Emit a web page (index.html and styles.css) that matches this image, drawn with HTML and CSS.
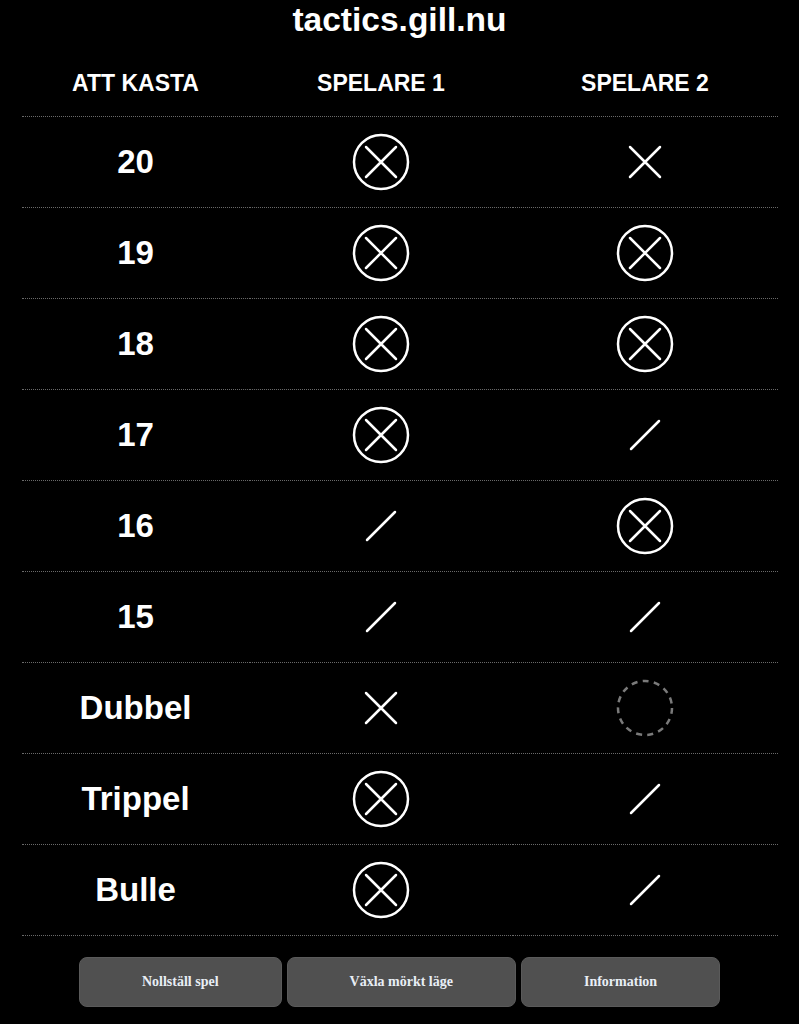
FILE: index.html
```html
<!DOCTYPE html>
<html lang="sv">
<head>
<meta charset="utf-8">
<title>tactics.gill.nu</title>
<link rel="stylesheet" href="styles.css">
</head>
<body>
<h1 class="title">tactics.gill.nu</h1>
<table class="board">
  <colgroup><col class="c1"><col class="c2"><col class="c3"></colgroup>
  <thead>
    <tr><th>ATT KASTA</th><th>SPELARE 1</th><th>SPELARE 2</th></tr>
  </thead>
  <tbody>
    <tr><td class="label">20</td>
      <td><svg class="mark" viewBox="0 0 60 60"><circle cx="30" cy="30" r="27"/><path d="M15 15L45 45M45 15L15 45"/></svg></td>
      <td><svg class="mark" viewBox="0 0 60 60"><path d="M15 15L45 45M45 15L15 45"/></svg></td></tr>
    <tr><td class="label">19</td>
      <td><svg class="mark" viewBox="0 0 60 60"><circle cx="30" cy="30" r="27"/><path d="M15 15L45 45M45 15L15 45"/></svg></td>
      <td><svg class="mark" viewBox="0 0 60 60"><circle cx="30" cy="30" r="27"/><path d="M15 15L45 45M45 15L15 45"/></svg></td></tr>
    <tr><td class="label">18</td>
      <td><svg class="mark" viewBox="0 0 60 60"><circle cx="30" cy="30" r="27"/><path d="M15 15L45 45M45 15L15 45"/></svg></td>
      <td><svg class="mark" viewBox="0 0 60 60"><circle cx="30" cy="30" r="27"/><path d="M15 15L45 45M45 15L15 45"/></svg></td></tr>
    <tr><td class="label">17</td>
      <td><svg class="mark" viewBox="0 0 60 60"><circle cx="30" cy="30" r="27"/><path d="M15 15L45 45M45 15L15 45"/></svg></td>
      <td><svg class="mark" viewBox="0 0 60 60"><path d="M16 44L44 16"/></svg></td></tr>
    <tr><td class="label">16</td>
      <td><svg class="mark" viewBox="0 0 60 60"><path d="M16 44L44 16"/></svg></td>
      <td><svg class="mark" viewBox="0 0 60 60"><circle cx="30" cy="30" r="27"/><path d="M15 15L45 45M45 15L15 45"/></svg></td></tr>
    <tr><td class="label">15</td>
      <td><svg class="mark" viewBox="0 0 60 60"><path d="M16 44L44 16"/></svg></td>
      <td><svg class="mark" viewBox="0 0 60 60"><path d="M16 44L44 16"/></svg></td></tr>
    <tr><td class="label">Dubbel</td>
      <td><svg class="mark" viewBox="0 0 60 60"><path d="M15 15L45 45M45 15L15 45"/></svg></td>
      <td><svg class="mark empty" viewBox="0 0 60 60"><circle cx="30" cy="30" r="27"/></svg></td></tr>
    <tr><td class="label">Trippel</td>
      <td><svg class="mark" viewBox="0 0 60 60"><circle cx="30" cy="30" r="27"/><path d="M15 15L45 45M45 15L15 45"/></svg></td>
      <td><svg class="mark" viewBox="0 0 60 60"><path d="M16 44L44 16"/></svg></td></tr>
    <tr><td class="label">Bulle</td>
      <td><svg class="mark" viewBox="0 0 60 60"><circle cx="30" cy="30" r="27"/><path d="M15 15L45 45M45 15L15 45"/></svg></td>
      <td><svg class="mark" viewBox="0 0 60 60"><path d="M16 44L44 16"/></svg></td></tr>
  </tbody>
</table>
<div class="actions">
  <button class="btn">Nollställ spel</button>
  <button class="btn">Växla mörkt läge</button>
  <button class="btn">Information</button>
</div>
</body>
</html>
```

FILE: styles.css
```css
html, body {
  margin: 0;
  padding: 0;
  background: #000;
  color: #fff;
  font-family: "Liberation Sans", Arial, sans-serif;
}

.title {
  margin: 0;
  font-size: 33.5px;
  line-height: 40px;
  font-weight: bold;
  text-align: center;
}

.board {
  width: 756px;
  margin: 11px auto 0;
  border-collapse: collapse;
  table-layout: fixed;
}

.c1 { width: 228px; }
.c2 { width: 263px; }
.c3 { width: 265px; }

.board th {
  height: 65px;
  padding: 0;
  font-size: 23px;
  font-weight: bold;
  text-align: center;
  vertical-align: middle;
  border-bottom: 1px dotted #6a6a6a;
}

.board td {
  height: 90px;
  padding: 0;
  text-align: center;
  vertical-align: middle;
  border-bottom: 1px dotted #6a6a6a;
}

.board .label {
  font-size: 33px;
  font-weight: bold;
}

.mark {
  display: block;
  width: 60px;
  height: 60px;
  margin: 0 auto;
  fill: none;
  stroke: #fff;
  stroke-width: 2.5;
  stroke-linecap: round;
}

.mark.empty {
  stroke: #7a7a7a;
  stroke-dasharray: 6 5.31;
  stroke-linecap: butt;
}

.actions {
  display: flex;
  justify-content: center;
  gap: 5px;
  margin-top: 21px;
}

.btn {
  height: 50px;
  padding: 0 62px;
  background: #505050;
  color: #e8eef5;
  border: 1px solid #5a5a5a;
  border-radius: 8px;
  font-family: "Liberation Serif", "Times New Roman", serif;
  font-weight: bold;
  font-size: 14px;
}
```
